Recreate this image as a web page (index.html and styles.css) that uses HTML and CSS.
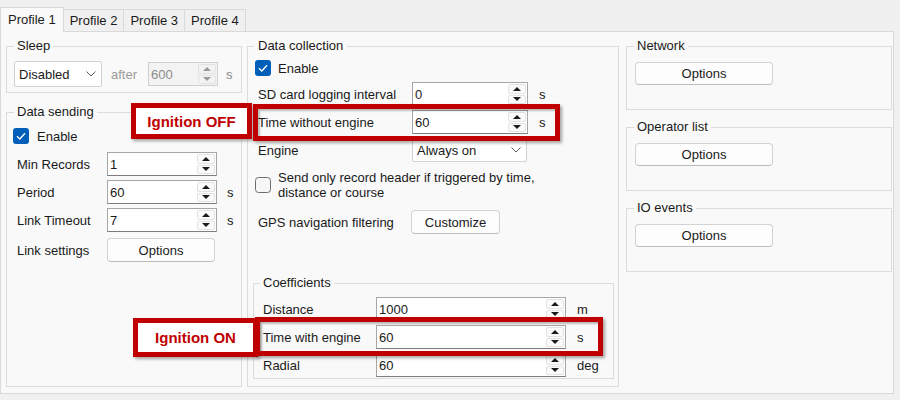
FILE: index.html
```html
<!DOCTYPE html>
<html>
<head>
<meta charset="utf-8">
<link rel="stylesheet" href="styles.css">
</head>
<body>
<div class="tabs">
  <div class="tab active">Profile 1</div>
  <div class="tab">Profile 2</div>
  <div class="tab">Profile 3</div>
  <div class="tab">Profile 4</div>
</div>
<div class="page">
  <div class="col left">
    <fieldset class="group sleep">
      <legend>Sleep</legend>
      <div class="row">
        <div class="combo w88"><span class="cv">Disabled</span><svg class="chev" width="10" height="6" viewBox="0 0 10 6"><polyline points="0.5,0.5 5,5 9.5,0.5" fill="none" stroke="#5a5a5a" stroke-width="1"/></svg></div>
        <span class="after">after</span>
        <div class="spin w70 disabled"><span class="val">600</span><span class="arrows"><span class="ab"><i class="up"></i></span><span class="ab"><i class="dn"></i></span></span></div>
        <span class="unit u8 dim">s</span>
      </div>
    </fieldset>
    <fieldset class="group sending">
      <legend>Data sending</legend>
      <div class="row r-first">
        <svg class="cb on" width="16" height="16" viewBox="0 0 16 16"><rect x="0" y="0" width="16" height="16" rx="3" fill="#005fb8"/><polyline points="4,8.3 6.8,11 12,5.3" fill="none" stroke="#fff" stroke-width="1.3"/></svg>
        <span class="cbl">Enable</span>
      </div>
      <div class="row"><span class="lbl l93">Min Records</span><div class="spin w110"><span class="val">1</span><span class="arrows"><span class="ab"><i class="up"></i></span><span class="ab"><i class="dn"></i></span></span></div></div>
      <div class="row"><span class="lbl l93">Period</span><div class="spin w110"><span class="val">60</span><span class="arrows"><span class="ab"><i class="up"></i></span><span class="ab"><i class="dn"></i></span></span></div><span class="unit u10">s</span></div>
      <div class="row"><span class="lbl l93">Link Timeout</span><div class="spin w110"><span class="val">7</span><span class="arrows"><span class="ab"><i class="up"></i></span><span class="ab"><i class="dn"></i></span></span></div><span class="unit u10">s</span></div>
      <div class="row r-btn"><span class="lbl l93">Link settings</span><div class="btn w108">Options</div></div>
    </fieldset>
  </div>

  <div class="col mid">
    <fieldset class="group collection">
      <legend>Data collection</legend>
      <div class="row r-enable">
        <svg class="cb on m1" width="16" height="16" viewBox="0 0 16 16"><rect x="0" y="0" width="16" height="16" rx="3" fill="#005fb8"/><polyline points="4,8.3 6.8,11 12,5.3" fill="none" stroke="#fff" stroke-width="1.3"/></svg>
        <span class="cbl c2">Enable</span>
      </div>
      <div class="row"><span class="lbl l158">SD card logging interval</span><div class="spin w116"><span class="val">0</span><span class="arrows"><span class="ab"><i class="up"></i></span><span class="ab"><i class="dn"></i></span></span></div><span class="unit u11">s</span></div>
      <div class="row"><span class="lbl l158">Time without engine</span><div class="spin w116"><span class="val">60</span><span class="arrows"><span class="ab"><i class="up"></i></span><span class="ab"><i class="dn"></i></span></span></div><span class="unit u11">s</span></div>
      <div class="row"><span class="lbl l158">Engine</span><div class="combo w115"><span class="cv">Always on</span><svg class="chev" width="10" height="6" viewBox="0 0 10 6"><polyline points="0.5,0.5 5,5 9.5,0.5" fill="none" stroke="#5a5a5a" stroke-width="1"/></svg></div></div>
      <div class="row r-check">
        <svg class="cb m1" width="16" height="16" viewBox="0 0 16 16"><rect x="0.5" y="0.5" width="15" height="15" rx="3" fill="#f7f7f7" stroke="#6e6e6e" stroke-width="1"/></svg>
        <span class="cbl c2 two">Send only record header if triggered by time,<br>distance or course</span>
      </div>
      <div class="row r-gps"><span class="lbl l157">GPS navigation filtering</span><div class="btn w89">Customize</div></div>

      <fieldset class="group coeff">
        <legend>Coefficients</legend>
        <div class="row r-first0"><span class="lbl l116">Distance</span><div class="spin w190"><span class="val">1000</span><span class="arrows"><span class="ab"><i class="up"></i></span><span class="ab"><i class="dn"></i></span></span></div><span class="unit u11">m</span></div>
        <div class="row"><span class="lbl l116">Time with engine</span><div class="spin w190"><span class="val">60</span><span class="arrows"><span class="ab"><i class="up"></i></span><span class="ab"><i class="dn"></i></span></span></div><span class="unit u11">s</span></div>
        <div class="row"><span class="lbl l116">Radial</span><div class="spin w190"><span class="val">60</span><span class="arrows"><span class="ab"><i class="up"></i></span><span class="ab"><i class="dn"></i></span></span></div><span class="unit u11">deg</span></div>
      </fieldset>
    </fieldset>
  </div>

  <div class="col right">
    <fieldset class="group side">
      <legend>Network</legend>
      <div class="btn w138">Options</div>
    </fieldset>
    <fieldset class="group side">
      <legend>Operator list</legend>
      <div class="btn w138">Options</div>
    </fieldset>
    <fieldset class="group side">
      <legend>IO events</legend>
      <div class="btn w138">Options</div>
    </fieldset>
  </div>
</div>

<div class="ann ann-off">Ignition OFF</div>
<div class="hl hl-off"></div>
<div class="ann ann-on">Ignition ON</div>
<div class="hl hl-on"></div>
</body>
</html>
```

FILE: styles.css
```css
* { box-sizing: border-box; }
html, body { margin: 0; padding: 0; }
body {
  width: 900px;
  height: 400px;
  overflow: hidden;
  position: relative;
  background: #f0f0f0;
  font-family: "Liberation Sans", Arial, sans-serif;
  font-size: 13px;
  color: #1a1a1a;
}

/* tabs */
.tabs {
  display: flex;
  align-items: flex-end;
  height: 31px;
  position: relative;
  z-index: 2;
}
.tab {
  height: 22px;
  padding: 0 6px;
  display: flex;
  align-items: center;
  background: #f0f0f0;
  border: 1px solid #d9d9d9;
  border-left: none;
  border-bottom: none;
  white-space: nowrap;
}
.tab.active {
  height: 25px;
  margin-bottom: -1px;
  padding: 0 7px;
  background: #f9f9f9;
  border-left: 1px solid #d9d9d9;
  padding-bottom: 2px;
}

/* page */
.page {
  width: 894px;
  height: 363px;
  background: #f9f9f9;
  border: 1px solid #d9d9d9;
  padding: 6px 1px 6px 5px;
  display: flex;
  gap: 5px;
}
.col { display: flex; flex-direction: column; }
.left { width: 236px; }
.mid { width: 372px; }
.right { width: 266px; margin-left: 2px; }

/* group boxes */
.group {
  margin: 0;
  min-width: 0;
  border: 1px solid #dcdcdc;
  border-radius: 0;
}
.group > legend {
  padding: 0 3px;
  line-height: 16px;
  height: 16px;
  font-size: 13px;
}
.sleep { padding: 7px 7px 5px 7px; }
.sending { padding: 4px 7px 0 7px; margin-top: 11px; flex: 1; }
.collection { padding: 4px 4px 6px 6px; flex: 1; }
.collection > legend { padding: 0 4px; }
.coeff { padding: 6px 4px 1px 6px; margin: 41px 0 0 -1px; }
.side { height: 72px; padding: 8px 7px 0 7px; }
.side + .side { margin-top: 9px; }

/* rows */
.row {
  display: flex;
  align-items: center;
  height: 24px;
  margin-top: 4px;
}
.sleep .row { height: 26px; margin-top: 0; }
.row.r-first, .row.r-first0 { margin-top: 0; }
.row.r-enable { margin-top: 0; height: 20px; }
.row.r-btn { margin-top: 6px; }
.row.r-check { height: 30px; margin-top: 8px; }
.row.r-gps { margin-top: 10px; }

.lbl { flex: none; white-space: nowrap; padding-left: 3px; }
.l93 { width: 93px; }
.l158 { width: 158px; padding-left: 4px; }
.l157 { width: 157px; padding-left: 4px; }
.l116 { width: 116px; }

.unit { flex: none; }
.u8 { margin-left: 8px; }
.u10 { margin-left: 10px; }
.u11 { margin-left: 11px; }
.dim { color: #8a8a8a; }

.after { width: 37px; margin-left: 9px; color: #9c9c9c; }

/* checkbox */
.cb { flex: none; display: block; margin-left: -1px; }
.cb.m1 { margin-left: 1px; }
.cbl { margin-left: 8px; }
.cbl.c2 { margin-left: 7px; }
.cbl.two { line-height: 15px; }

/* spin box */
.spin {
  flex: none;
  height: 24px;
  display: flex;
  align-items: stretch;
  background: #fff;
  border: 1px solid #a6a6a6;
  border-bottom-color: #7d7d7d;
}
.spin .val { flex: 1; padding-left: 2px; display: flex; align-items: center; }
.spin .arrows {
  width: 19px;
  display: flex;
  flex-direction: column;
  padding: 1px 1px 1px 0;
  gap: 1px;
}
.spin .ab {
  flex: 1;
  display: flex;
  align-items: center;
  justify-content: center;
  border: 1px solid #e2e2e2;
  border-radius: 2px;
  background: #fafafa;
}
.up, .dn { display: block; width: 0; height: 0; border-left: 4px solid transparent; border-right: 4px solid transparent; }
.up { border-bottom: 4px solid #1a1a1a; }
.dn { border-top: 4px solid #1a1a1a; }
.spin.disabled { background: #f3f3f3; border-color: #cfcfcf; }
.spin.disabled .val { color: #8c8c8c; }
.spin.disabled .ab { background: #f3f3f3; }
.spin.disabled .up { border-bottom-color: #9a9a9a; }
.spin.disabled .dn { border-top-color: #9a9a9a; }

.w70 { width: 70px; }
.w110 { width: 110px; }
.w116 { width: 116px; }
.w190 { width: 190px; }

/* combobox */
.combo {
  flex: none;
  height: 100%;
  display: flex;
  align-items: center;
  justify-content: space-between;
  background: #fff;
  border: 1px solid #d2d2d2;
  border-radius: 2px;
  padding: 0 5px 0 4px;
}
.w88 { width: 88px; }
.w115 { width: 115px; }
.chev { display: block; }

/* buttons */
.btn {
  flex: none;
  height: 24px;
  display: flex;
  align-items: center;
  justify-content: center;
  background: #fdfdfd;
  border: 1px solid #d3d3d3;
  border-bottom-color: #bdbdbd;
  border-radius: 4px;
}
.w108 { width: 108px; }
.w89 { width: 89px; }
.w138 { width: 138px; height: 23px; margin-left: 1px; }

/* annotations (overlays) */
.ann, .hl {
  position: absolute;
  border: 5px solid #c00000;
  box-shadow: 2px 2px 3px rgba(0, 0, 0, 0.35);
  z-index: 5;
}
.ann {
  background: #fff;
  color: #c00000;
  font-weight: bold;
  font-size: 15px;
  display: flex;
  align-items: center;
  justify-content: center;
}
.hl { box-shadow: 2px 2px 3px rgba(0, 0, 0, 0.35), inset 2px 2px 2px rgba(0, 0, 0, 0.25); }
.ann-off { left: 131px; top: 103px; width: 121px; height: 36px; }
.hl-off { left: 253px; top: 104px; width: 307px; height: 37px; }
.ann-on { left: 133px; top: 318px; width: 125px; height: 39px; }
.hl-on { left: 255px; top: 317px; width: 348px; height: 39px; }
```
